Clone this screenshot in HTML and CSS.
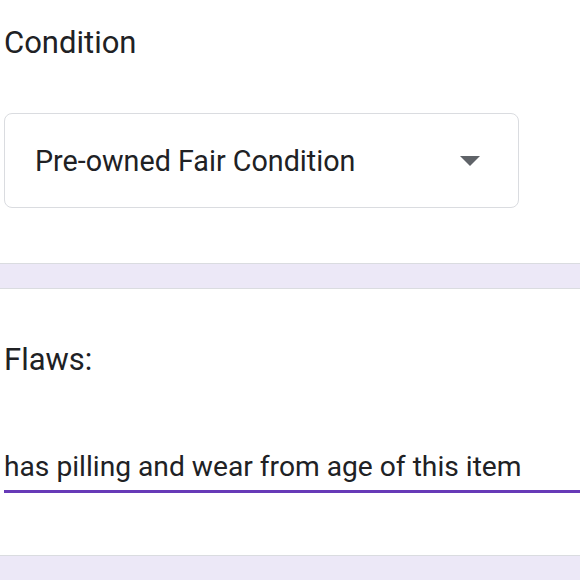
FILE: index.html
```html
<!DOCTYPE html>
<html lang="en">
<head>
<meta charset="utf-8">
<title>Form</title>
<link rel="stylesheet" href="styles.css">
</head>
<body>
  <section class="question">
    <div class="q-title">Condition</div>
    <div class="select">
      <span class="select-value">Pre-owned Fair Condition</span>
      <svg class="select-arrow" width="20" height="10" viewBox="0 0 20 10" aria-hidden="true"><path d="M0 0h20L10 10z" fill="#5f6368"/></svg>
    </div>
  </section>
  <div class="gap"></div>
  <section class="question question-text">
    <div class="q-title">Flaws:</div>
    <div class="answer">has pilling and wear from age of this item</div>
  </section>
  <div class="gap gap-last"></div>
</body>
</html>
```

FILE: styles.css
```css
html, body {
  margin: 0;
  padding: 0;
  background: #ffffff;
  font-family: Roboto, "Liberation Sans", Arial, sans-serif;
  color: #202124;
  overflow: hidden;
}

.question {
  padding: 23px 0 0 4px;
  background: #ffffff;
}

.q-title {
  font-size: 31px;
  line-height: 40px;
  letter-spacing: 0;
}

.select {
  margin-top: 50px;
  width: 515px;
  height: 95px;
  box-sizing: border-box;
  border: 1px solid #dadce0;
  border-radius: 8px;
  display: flex;
  align-items: center;
  justify-content: space-between;
  padding: 0 38px 0 30px;
}

.select-value {
  font-size: 28.7px;
}

.select-arrow {
  display: block;
  margin-top: 1px;
}

.gap {
  margin-top: 55px;
  height: 24px;
  background: #ece8f7;
  border-top: 1px solid #dadce0;
  border-bottom: 1px solid #dadce0;
}

.question-text {
  padding-top: 51px;
  height: 266px;
  box-sizing: border-box;
}

.answer {
  margin-top: 69px;
  font-size: 28.2px;
  line-height: 36px;
  padding-bottom: 5px;
  border-bottom: 3px solid #673ab7;
  margin-right: -4px;
}

.gap-last {
  margin-top: 0;
  height: 40px;
}
```
